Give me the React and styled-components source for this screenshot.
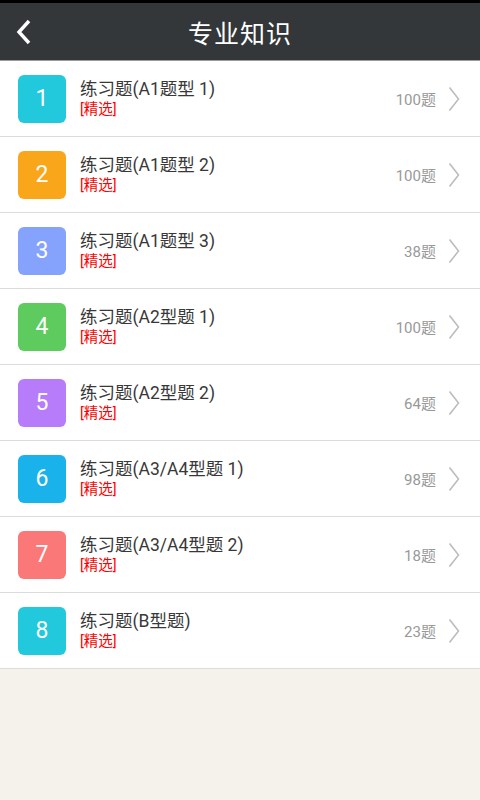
import React from 'react'
import styled, { createGlobalStyle } from 'styled-components'

const Global = createGlobalStyle`
  html, body { margin: 0; padding: 0; }
  body {
    background: #f5f2eb;
    font-family: Roboto, "Noto Sans CJK SC", sans-serif;
  }
`

const Page = styled.div`
  width: 480px;
  min-height: 800px;
  background: #f5f2eb;
`

const StatusStrip = styled.div`
  height: 3px;
  background: #000;
`

const Header = styled.div`
  height: 57px;
  background: #33373a;
  border-bottom: 1px solid #9a9c9d;
  display: flex;
  align-items: center;
  justify-content: center;
  position: relative;
`

const BackButton = styled.button`
  position: absolute;
  left: 12px;
  top: 14px;
  width: 26px;
  height: 30px;
  padding: 0;
  border: 0;
  background: none;
  display: flex;
  align-items: center;
  justify-content: center;
`

const Title = styled.h1`
  margin: 0;
  color: #fff;
  font-size: 25px;
  font-weight: normal;
  letter-spacing: 1px;
`

const List = styled.ul`
  list-style: none;
  margin: 0;
  padding: 0;
  background: #fff;
`

const Row = styled.li`
  height: 75px;
  display: flex;
  align-items: center;
  padding: 0 20px 0 18px;
  border-bottom: 1px solid #dcdcdc;
`

const Badge = styled.div`
  width: 48px;
  height: 48px;
  border-radius: 6px;
  background: ${p => p.$color};
  color: #fff;
  font-size: 23px;
  display: flex;
  align-items: center;
  justify-content: center;
  flex-shrink: 0;
`

const Texts = styled.div`
  flex: 1;
  margin-left: 14px;
  margin-top: 1px;
  display: flex;
  flex-direction: column;
`

const ItemName = styled.div`
  font-size: 17.5px;
  line-height: 20px;
  color: #383838;
`

const Tag = styled.div`
  margin-top: 2px;
  font-size: 14.5px;
  line-height: 18px;
  color: #f00;
`

const Count = styled.span`
  font-size: 15px;
  color: #999;
  margin-right: 12px;
`

const items = [
  { n: 1, name: '练习题(A1题型 1)', count: 100, color: '#22c8dc' },
  { n: 2, name: '练习题(A1题型 2)', count: 100, color: '#f9a61a' },
  { n: 3, name: '练习题(A1题型 3)', count: 38, color: '#85a3fc' },
  { n: 4, name: '练习题(A2型题 1)', count: 100, color: '#5dcb5e' },
  { n: 5, name: '练习题(A2型题 2)', count: 64, color: '#b77cfa' },
  { n: 6, name: '练习题(A3/A4型题 1)', count: 98, color: '#19b2eb' },
  { n: 7, name: '练习题(A3/A4型题 2)', count: 18, color: '#fb7878' },
  { n: 8, name: '练习题(B型题)', count: 23, color: '#22c8dc' }
]

const Chevron = () => (
  <svg width="12" height="26" viewBox="0 0 12 26">
    <path d="M1.5 1.5 L10.5 13 L1.5 24.5" fill="none" stroke="#bdbdbd" strokeWidth="1.6" />
  </svg>
)

const App = () => (
  <Page>
    <Global />
    <StatusStrip />
    <Header>
      <BackButton>
        <svg width="20" height="28" viewBox="0 0 20 28">
          <path d="M14 3 L4 14 L14 25" fill="none" stroke="#fff" strokeWidth="3.4" />
        </svg>
      </BackButton>
      <Title>专业知识</Title>
    </Header>
    <List>
      {items.map(it => (
        <Row key={it.n}>
          <Badge $color={it.color}>{it.n}</Badge>
          <Texts>
            <ItemName>{it.name}</ItemName>
            <Tag>[精选]</Tag>
          </Texts>
          <Count>{it.count}题</Count>
          <Chevron />
        </Row>
      ))}
    </List>
  </Page>
)

export default App
